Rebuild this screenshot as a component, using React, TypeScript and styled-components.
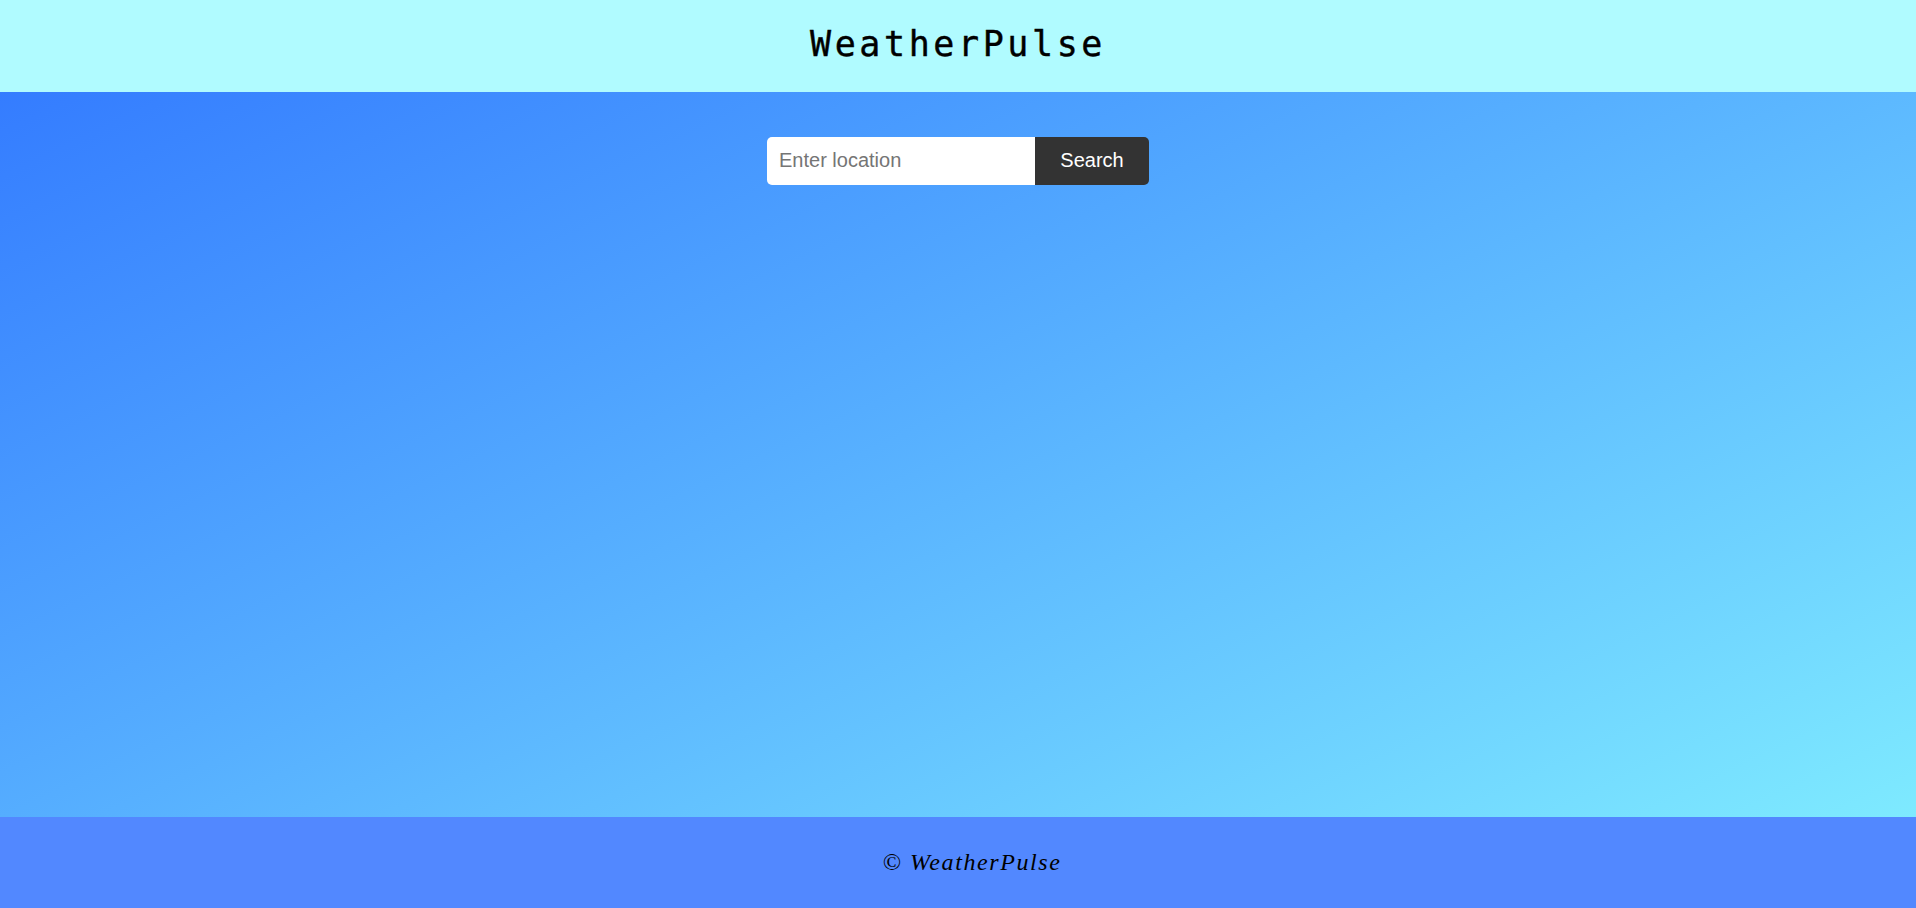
import React from "react";
import styled, { createGlobalStyle } from "styled-components";

const GlobalStyle = createGlobalStyle`
  html, body { margin: 0; padding: 0; height: 100%; }
  body { font-family: "Liberation Sans", Arial, sans-serif; }
  #root { height: 100%; }
  * { box-sizing: border-box; }
`;

const Page = styled.div`
  display: flex;
  flex-direction: column;
  height: 908px;
  background: linear-gradient(to bottom right, #3076ff 0%, #82f0ff 100%);
`;

const Header = styled.header`
  height: 92px;
  flex: 0 0 92px;
  background: #b0fbff;
  display: flex;
  align-items: center;
  justify-content: center;
`;

const Title = styled.h1`
  margin: 0;
  font-family: "DejaVu Sans Mono", "Liberation Mono", monospace;
  font-weight: 400;
  font-size: 35px;
  letter-spacing: 3.6px;
  color: #000;
  padding-bottom: 4px;
  -webkit-text-stroke: 0.4px #000;
`;

const Main = styled.main`
  flex: 1;
  display: flex;
  flex-direction: column;
  align-items: center;
  padding-top: 45px;
`;

const SearchForm = styled.form`
  display: flex;
  height: 48px;
  border-radius: 5px;
  overflow: hidden;
`;

const Input = styled.input`
  width: 268px;
  height: 48px;
  border: none;
  outline: none;
  padding: 0 12px 2px;
  font-family: "Liberation Sans", Arial, sans-serif;
  font-size: 20px;
  color: #222;
  background: #fff;
  &::placeholder { color: #757575; }
`;

const Button = styled.button`
  width: 114px;
  height: 48px;
  border: none;
  padding: 0 0 2px;
  background: #333333;
  color: #fff;
  font-family: "Liberation Sans", Arial, sans-serif;
  font-size: 20px;
  cursor: pointer;
`;

const Footer = styled.footer`
  height: 91px;
  flex: 0 0 91px;
  background: #5288ff;
  display: flex;
  align-items: center;
  justify-content: center;
  padding-left: 28px;
`;

const FooterText = styled.p`
  margin: 0;
  font-family: "Liberation Serif", "DejaVu Serif", serif;
  font-style: italic;
  font-size: 24px;
  letter-spacing: 1.6px;
  color: #000;
`;

export default function App() {
  return (
    <>
      <GlobalStyle />
      <Page>
        <Header>
          <Title>WeatherPulse</Title>
        </Header>
        <Main>
          <SearchForm onSubmit={(e) => e.preventDefault()}>
            <Input type="text" placeholder="Enter location" />
            <Button type="submit">Search</Button>
          </SearchForm>
        </Main>
        <Footer>
          <FooterText>© WeatherPulse</FooterText>
        </Footer>
      </Page>
    </>
  );
}
